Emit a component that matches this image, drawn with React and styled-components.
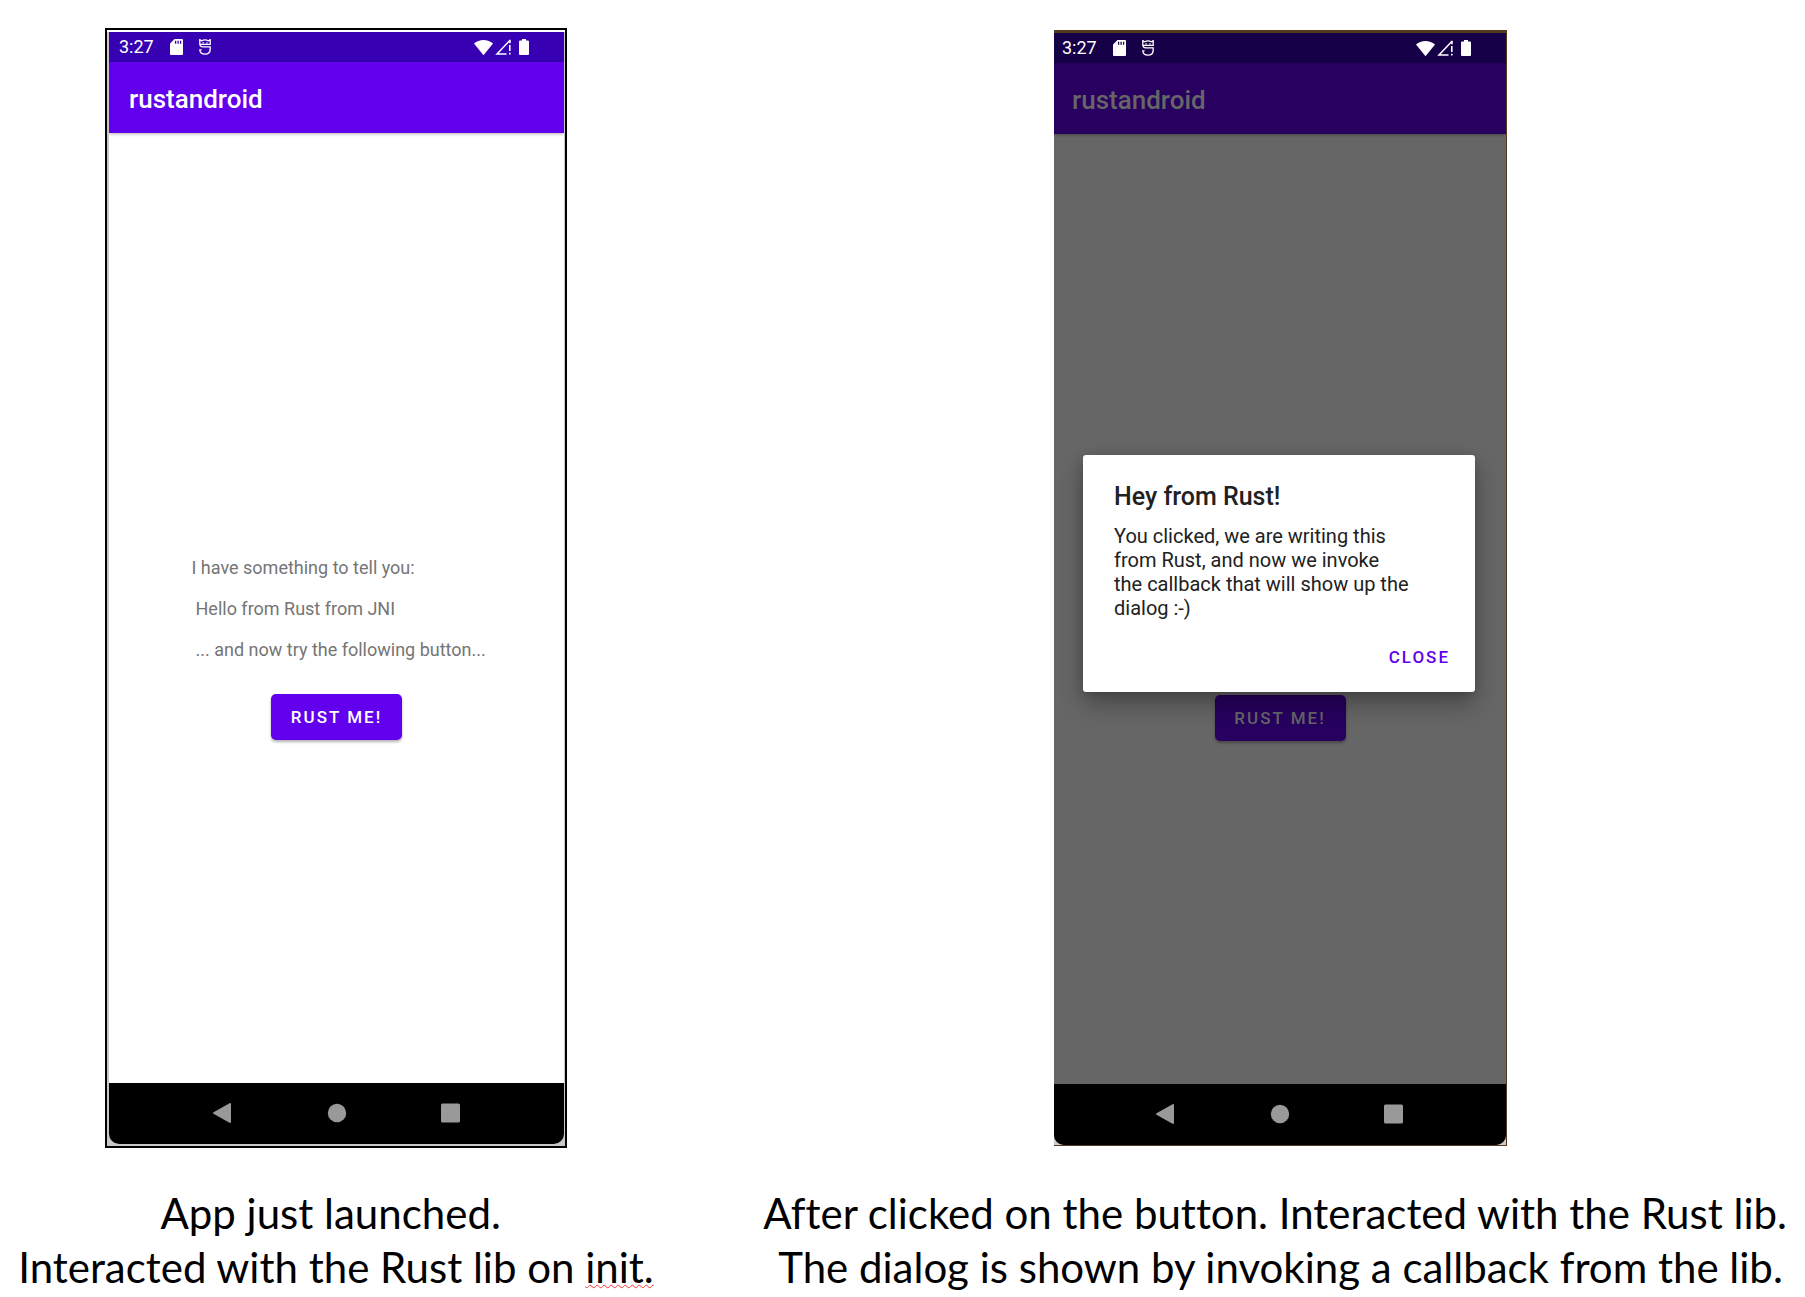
import React from 'react';
import styled, { createGlobalStyle, css } from 'styled-components';

const Global = createGlobalStyle`
  * { box-sizing: border-box; }
  body { margin: 0; background: #fff; }
`;

const Page = styled.main`
  display: grid;
  grid-template-columns: 672fr 1049fr;
  gap: 84px;
  align-items: start;
  padding-top: 28px;
  font-family: Roboto, "Liberation Sans", sans-serif;
`;

const Panel = styled.figure`
  margin: 0;
  display: flex;
  flex-direction: column;
  align-items: center;
`;

const Frame = styled.div`
  ${(p) =>
    p.$outlined
      ? css`
          width: 462px;
          height: 1120px;
          border: 2px solid #000;
          padding: 2px 1px 2px 2px;
          background: linear-gradient(#fff 2px, #c8c8c8 2px);
        `
      : css`
          width: 453px;
          height: 1116px;
          margin: 2px 0;
          border: solid #553a22;
          border-width: 3px 1px 1px 0;
          background: #d2c8c8;
        `}
`;

const Phone = styled.section`
  position: relative;
  height: 100%;
  display: flex;
  flex-direction: column;
  background: ${(p) => (p.$dimmed ? '#666' : '#fff')};
  border-radius: 0 0 10px 10px;
  overflow: hidden;
`;

const StatusBar = styled.div`
  height: 30px;
  flex: none;
  display: flex;
  align-items: center;
  justify-content: space-between;
  padding: 0 35px 0 ${(p) => (p.$dimmed ? 8 : 10)}px;
  color: #fff;
  background: ${(p) => (p.$dimmed ? '#160047' : '#3700b3')};
`;

const StatusGroup = styled.div`
  display: flex;
  align-items: center;
  gap: ${(p) => p.$gap}px;
`;

const Clock = styled.span`
  font-size: 18px;
  line-height: 24px;
`;

const AppBar = styled.header`
  height: 71px;
  flex: none;
  display: flex;
  align-items: center;
  padding: 2px 0 0 ${(p) => (p.$dimmed ? 18 : 20)}px;
  background: ${(p) => (p.$dimmed ? '#270060' : '#6200ee')};
  box-shadow: 0 1px 3px rgba(0, 0, 0, 0.3);
`;

const AppTitle = styled.h1`
  margin: 0;
  font-size: 26px;
  line-height: 32px;
  font-weight: 500;
  color: ${(p) => (p.$dimmed ? '#666' : '#fff')};
`;

const Body = styled.div`
  flex: 1;
  display: flex;
  flex-direction: column;
  align-items: center;
  justify-content: flex-end;
  padding-bottom: 343px;
`;

const Messages = styled.div`
  width: 290px;
  display: flex;
  flex-direction: column;
  gap: 17px;
  margin-bottom: 32px;
`;

const Message = styled.p`
  margin: 0;
  padding-left: ${(p) => (p.$indent ? 4 : 0)}px;
  font-size: 18px;
  line-height: 24px;
  color: #757575;
  white-space: nowrap;
`;

const RustButton = styled.button`
  width: 131px;
  height: 46px;
  padding: 0;
  border: 0;
  border-radius: 5px;
  font-family: inherit;
  font-size: 17px;
  font-weight: 500;
  letter-spacing: 2px;
  color: ${(p) => (p.$dimmed ? '#666' : '#fff')};
  background: ${(p) => (p.$dimmed ? '#270060' : '#6200ee')};
  box-shadow: 0 2px 3px rgba(0, 0, 0, 0.3);
`;

const NavBar = styled.nav`
  height: 61px;
  flex: none;
  display: flex;
  align-items: center;
  justify-content: center;
  gap: 90px;
  padding-bottom: 2px;
  background: #000;
`;

const NavButton = styled.button`
  width: 24px;
  height: 24px;
  padding: 0;
  border: 0;
  background: none;
  display: flex;
`;

const Dialog = styled.div`
  position: absolute;
  left: 29px;
  right: 31px;
  top: 422px;
  height: 237px;
  padding: 26px 25px 16px 31px;
  display: flex;
  flex-direction: column;
  background: #fff;
  border-radius: 3px;
  box-shadow: 0 12px 24px rgba(0, 0, 0, 0.3), 0 2px 10px rgba(0, 0, 0, 0.15);
  color: #212121;
`;

const DialogTitle = styled.h2`
  margin: 0 0 11px;
  font-size: 25px;
  line-height: 32px;
  font-weight: 500;
`;

const DialogText = styled.p`
  margin: 0;
  width: 310px;
  font-size: 20px;
  line-height: 24px;
`;

const CloseButton = styled.button`
  align-self: flex-end;
  margin-top: 21px;
  padding: 0;
  border: 0;
  background: none;
  font-family: inherit;
  font-size: 17px;
  line-height: 32px;
  font-weight: 500;
  letter-spacing: 2px;
  color: #6200ee;
`;

const Caption = styled.figcaption`
  margin-top: 38px;
  font-family: Lato, Carlito, sans-serif;
  font-size: 42px;
  font-variant-ligatures: none;
  line-height: 54px;
  text-align: center;
  white-space: nowrap;
  color: #000;
`;

const Misspelt = styled.span`
  text-decoration: underline wavy #f33 1px;
  text-underline-offset: 1px;
  text-decoration-skip-ink: none;
`;

const SdCard = ({ slot }) => (
  <svg width="13" height="16" viewBox="0 0 13 16" aria-hidden="true">
    <path d="M4.500 0H12a1 1 0 0 1 1 1v14a1 1 0 0 1-1 1H1a1 1 0 0 1-1-1V4.500z" fill="currentColor" />
    <path d="M5.600 1.800v3M8.100 1.800v3M10.600 1.800v3" stroke={slot} strokeWidth="1.300" />
  </svg>
);

const Mascot = () => (
  <svg width="12" height="16" viewBox="0 0 12 16" fill="none" stroke="currentColor" strokeWidth="1.300" aria-hidden="true">
    <path d="M.8 0v4.800Q.8 7.800 3.800 7.800H11.200V10.400Q11 15.200 6 15.200T.8 10.800H2.600" />
    <path d="M11.200 0v5.400H.8M.8 .9L2.600 1.800Q6 0 9.400 1.800L11.200 .9" />
    <path d="M3.400 3.800h1.400M7.200 3.800h1.400" />
  </svg>
);

const Wifi = () => (
  <svg width="19" height="15" viewBox="0 0 19 15" aria-hidden="true">
    <path d="M9.500 15.200L0 3.600C5-1.200 14-1.200 19 3.600z" fill="currentColor" />
  </svg>
);

const Signal = () => (
  <svg width="16" height="16" viewBox="0 0 16 16" aria-hidden="true">
    <path d="M15 .8v3.400M15 1.200L2 14.900h9.500" fill="none" stroke="currentColor" strokeWidth="1.500" />
    <path d="M14 6h1.600v6H14zM14 13.800h1.600v1.800H14z" fill="currentColor" />
  </svg>
);

const Battery = () => (
  <svg width="10" height="16" viewBox="0 0 10 16" aria-hidden="true">
    <path d="M3 0h4v1.500h2a1 1 0 0 1 1 1V15a1 1 0 0 1-1 1H1a1 1 0 0 1-1-1V2.500a1 1 0 0 1 1-1h2z" fill="currentColor" />
  </svg>
);

const NavIcon = ({ children }) => (
  <svg width="24" height="24" viewBox="0 0 24 24" fill="#999" aria-hidden="true">
    {children}
  </svg>
);

function Device({ dimmed, outlined, messages, children }) {
  return (
    <Frame $outlined={outlined}>
      <Phone $dimmed={dimmed}>
        <StatusBar $dimmed={dimmed}>
          <StatusGroup $gap={16}>
            <Clock>3:27</Clock>
            <SdCard slot={dimmed ? '#160047' : '#3700b3'} />
            <Mascot />
          </StatusGroup>
          <StatusGroup $gap={8}>
            <StatusGroup $gap={2}>
              <Wifi />
              <Signal />
            </StatusGroup>
            <Battery />
          </StatusGroup>
        </StatusBar>
        <AppBar $dimmed={dimmed}>
          <AppTitle $dimmed={dimmed}>rustandroid</AppTitle>
        </AppBar>
        <Body>
          {messages && (
            <Messages>
              <Message>I have something to tell you:</Message>
              <Message $indent>Hello from Rust from JNI</Message>
              <Message $indent>... and now try the following button...</Message>
            </Messages>
          )}
          <RustButton type="button" $dimmed={dimmed}>RUST ME!</RustButton>
        </Body>
        <NavBar>
          <NavButton type="button" aria-label="Back">
            <NavIcon>
              <path d="M2.500 11.200L18.500 2.200q1.500-.6 1.500 1v17.600q0 1.600-1.500 1L2.500 12.800q-1.200-.8 0-1.600z" />
            </NavIcon>
          </NavButton>
          <NavButton type="button" aria-label="Home">
            <NavIcon><circle cx="12" cy="12" r="9.200" /></NavIcon>
          </NavButton>
          <NavButton type="button" aria-label="Overview">
            <NavIcon><rect x="2" y="2.500" width="19" height="19" rx="1.500" /></NavIcon>
          </NavButton>
        </NavBar>
        {children}
      </Phone>
    </Frame>
  );
}

export default function App() {
  return (
    <>
      <Global />
      <Page>
        <Panel>
          <Device outlined messages />
          <Caption>
            App just launched.&nbsp;
            <br />
            Interacted with the Rust lib on <Misspelt>init.</Misspelt>
          </Caption>
        </Panel>
        <Panel>
          <Device dimmed>
            <Dialog role="dialog" aria-labelledby="dialog-title">
              <DialogTitle id="dialog-title">Hey from Rust!</DialogTitle>
              <DialogText>
                You clicked, we are writing this from Rust, and now we invoke
                <br />
                the callback that will show up the dialog :-)
              </DialogText>
              <CloseButton type="button">CLOSE</CloseButton>
            </Dialog>
          </Device>
          <Caption>
            After clicked on the button. Interacted with the Rust lib.&nbsp;
            <br />
            The dialog is shown by invoking a callback from the lib.
          </Caption>
        </Panel>
      </Page>
    </>
  );
}
